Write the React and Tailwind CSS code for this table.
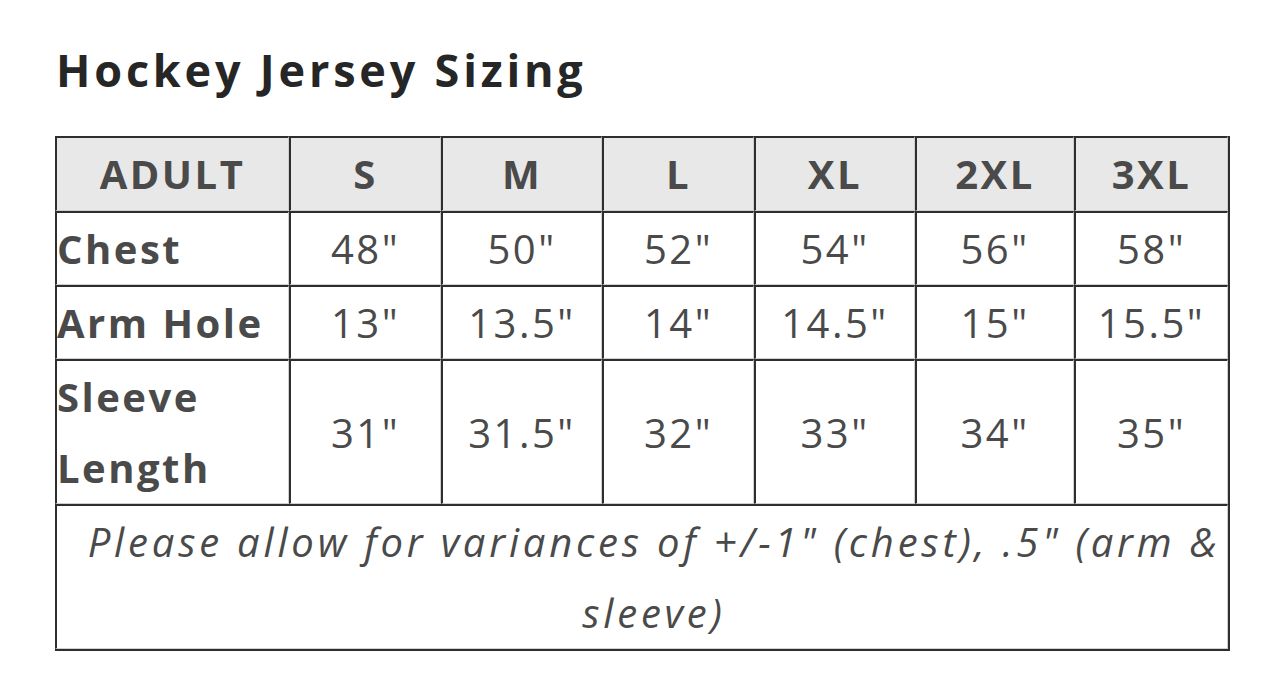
import React from 'react';

const sizes = ['S', 'M', 'L', 'XL', '2XL', '3XL'];
const rows = [
  { label: 'Chest', values: ['48"', '50"', '52"', '54"', '56"', '58"'] },
  { label: 'Arm Hole', values: ['13"', '13.5"', '14"', '14.5"', '15"', '15.5"'] },
  { label: 'Sleeve Length', values: ['31"', '31.5"', '32"', '33"', '34"', '35"'] },
];
const widths = ['w-[234px]', 'w-[152px]', 'w-[161px]', 'w-[152px]', 'w-[161px]', 'w-[159px]', 'w-[154px]'];

const cell = 'border-l-2 border-t-2 border-l-[#2e2e2e] border-t-[#2e2e2e] border-r border-b border-r-[#cfcfcf] border-b-[#cfcfcf] p-0';

export default function App() {
  return (
    <div className="min-h-screen bg-white pt-[38px] pl-[56px] text-[#4a4a4a]" style={{ fontFamily: '"Open Sans", "Liberation Sans", sans-serif' }}>
      <h2 className="text-[45px] font-bold leading-[64px] text-[#262626] tracking-[3.8px]">Hockey Jersey Sizing</h2>
      <table className="mt-[34px] -ml-px border-separate border-spacing-0 border-r-2 border-b-2 border-[#2e2e2e] table-fixed w-[1173px] text-[40px] leading-[71px] tracking-[2.5px]">
        <colgroup>
          {widths.map((w, i) => (
            <col key={i} className={w} />
          ))}
        </colgroup>
        <thead>
          <tr className="bg-[#e8e8e8]">
            <th className={`${cell} font-bold leading-[72px]`}>ADULT</th>
            {sizes.map((s) => (
              <th key={s} className={`${cell} font-bold leading-[72px]`}>{s}</th>
            ))}
          </tr>
        </thead>
        <tbody>
          {rows.map((r) => (
            <tr key={r.label}>
              <td className={`${cell} text-left font-bold`}>{r.label}</td>
              {r.values.map((v, i) => (
                <td key={i} className={`${cell} text-center font-normal`}>{v}</td>
              ))}
            </tr>
          ))}
          <tr>
            <td colSpan={7} className={`${cell} text-center italic font-normal pl-[24px] pr-0 tracking-[3.8px]`}>
              Please allow for variances of +/-1" (chest), .5" (arm &amp; sleeve)
            </td>
          </tr>
        </tbody>
      </table>
    </div>
  );
}
